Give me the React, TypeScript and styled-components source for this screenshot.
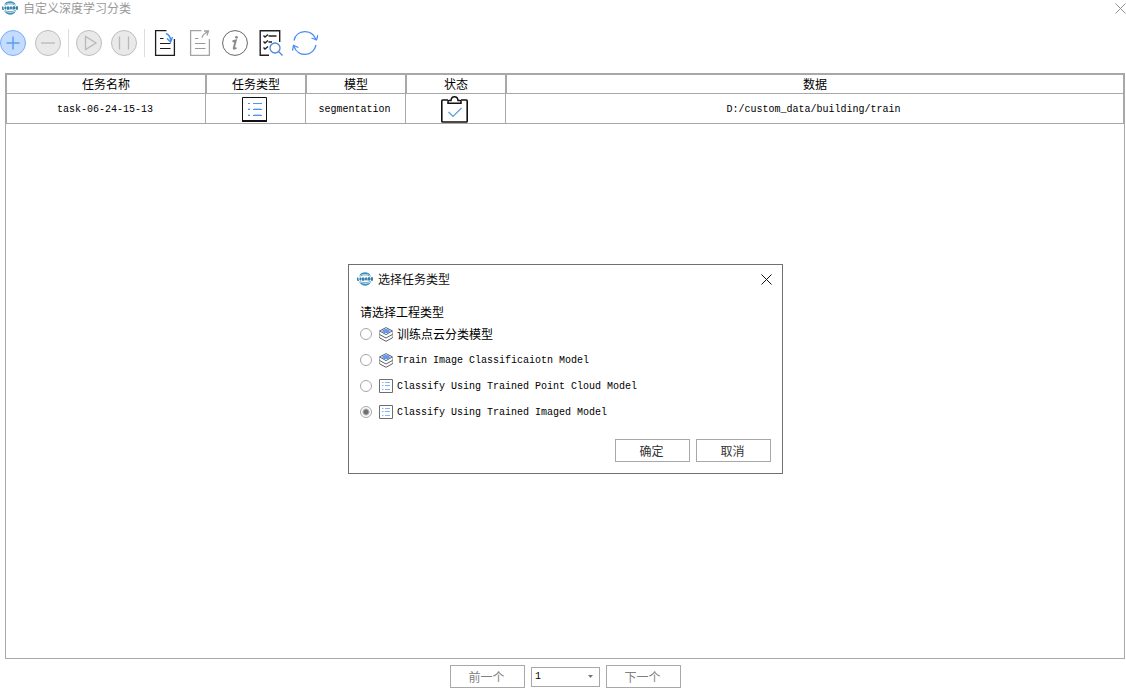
import React, { useState } from "react";
import styled, { createGlobalStyle } from "styled-components";

const line = "#a8a8a8";
const mono = `"Liberation Mono", "Noto Sans CJK SC", monospace`;
const sans = `"Noto Sans CJK SC", "Liberation Sans", sans-serif`;

const GlobalStyle = createGlobalStyle`
  * { box-sizing: border-box; }
  body { margin: 0; background: #fff; color: #000; font: 12px/16px ${sans}; }
  button, select, input { font: inherit; margin: 0; }
  svg { display: block; flex: none; }
`;

const Page = styled.div`
  display: flex;
  flex-direction: column;
  min-height: 100vh;
`;

const TitleBar = styled.header<{ $inset?: boolean }>`
  display: flex;
  align-items: center;
  gap: 5px;
  height: ${(p) => (p.$inset ? 28 : 16)}px;
  padding: ${(p) => (p.$inset ? "0 10px 0 8px" : "0 0 0 2px")};
`;

const Title = styled.h1<{ $muted?: boolean }>`
  flex: 1;
  margin: 0;
  font-size: 12px;
  line-height: 16px;
  font-weight: 400;
  color: ${(p) => (p.$muted ? "#999" : "#111")};
`;

const CloseButton = styled.button<{ $muted?: boolean }>`
  padding: 0;
  border: 0;
  background: none;
  color: ${(p) => (p.$muted ? "#909090" : "#111")};
`;

const Toolbar = styled.div`
  display: flex;
  align-items: center;
  gap: 7px;
  height: 54px;
`;

const ToolGroup = styled.div`
  display: flex;
  gap: 9px;
`;

const Separator = styled.span`
  width: 1px;
  height: 28px;
  background: #dcdcdc;
`;

const ToolButton = styled.button`
  width: 26px;
  height: 26px;
  padding: 0;
  border: 0;
  background: none;
`;

const Panel = styled.main`
  flex: 1;
  margin: 3px 1px 0 5px;
  border: 1px solid ${line};
`;

const TaskTable = styled.table`
  width: 100%;
  table-layout: fixed;
  border-collapse: separate;
  border-spacing: 0;
  text-align: center;
`;

const Column = styled.col<{ $width?: number }>`
  width: ${(p) => (p.$width ? `${p.$width}px` : "auto")};
`;

const HeadCell = styled.th`
  height: 20px;
  padding: 0;
  border: 1px solid ${line};
  font-weight: 400;
  line-height: 18px;
`;

const Cell = styled.td`
  height: 30px;
  padding: 2px 2px 0 0;
  border: solid ${line};
  border-width: 0 1px 1px 0;
  font: 10px/14px ${mono};
  &:first-child { border-left-width: 1px; }
  svg { margin: 0 auto; }
`;

const Pager = styled.nav`
  display: flex;
  justify-content: center;
  align-items: center;
  gap: 6px;
  padding: 6px 0 6px 5px;
`;

const PushButton = styled.button<{ $muted?: boolean }>`
  width: 75px;
  height: 23px;
  padding: 0 2px 0 0;
  border: 1px solid ${line};
  background: #fff;
  color: ${(p) => (p.$muted ? "#808080" : "#333")};
  line-height: 20px;
`;

const SelectBox = styled.label`
  display: grid;
  align-items: center;
  width: 69px;
  & > * { grid-area: 1 / 1; }
  svg { justify-self: end; margin-right: 7px; pointer-events: none; }
`;

const PageSelect = styled.select`
  appearance: none;
  width: 100%;
  height: 20px;
  padding: 1px 3px 0;
  border: 1px solid ${line};
  border-radius: 0;
  background: #fff;
  color: #000;
  font: 10px/16px ${mono};
`;

const Dialog = styled.section`
  position: absolute;
  top: 264px;
  left: 50%;
  width: 435px;
  margin-left: -215px;
  border: 1px solid #707070;
  background: #fff;
`;

const Choices = styled.fieldset`
  display: grid;
  margin: 0;
  padding: 10px 11px 0;
  border: 0;
`;

const Legend = styled.legend`
  float: left;
  padding: 0;
  line-height: 18px;
`;

const Choice = styled.label`
  display: flex;
  align-items: center;
  height: 26px;
`;

const Radio = styled.input`
  appearance: none;
  width: 12px;
  height: 12px;
  border: 1px solid #a6a6a6;
  border-radius: 50%;
  background: #fff;
  &:checked {
    background: radial-gradient(circle, #707070 0 2px, #fff 4px);
  }
`;

const ChoiceText = styled.span<{ $latin?: boolean }>`
  padding-top: ${(p) => (p.$latin ? 2 : 0)}px;
  font: ${(p) => (p.$latin ? `10px/14px ${mono}` : `12px/16px ${sans}`)};
`;

const ChoiceIcon = styled.span`
  margin: 0 4px 0 7px;
`;

const Actions = styled.div`
  display: flex;
  justify-content: flex-end;
  gap: 6px;
  padding: 14px 11px 11px;
`;

const Logo = () => (
  <svg width="16" height="16" viewBox="0 0 16 16" fill="none" aria-hidden="true">
    <path d="M2.2 4.5C4.5.2 11.5.2 13.8 4.5C10 2.500 6 2.500 2.200 4.500Z" fill="#3d93bd" />
    <path d="M2.500 5.400C6 3.400 10 3.400 13.500 5.400" stroke="#69aed0" />
    <path d="M2 11C5 15.800 11.500 16 14.200 11C10.500 13.400 6.500 13.200 2 11Z" fill="#3d93bd" />
    <path d="M2.500 10.600C6 12 10 12 13.800 10.400" stroke="#69aed0" />
    <path d="M0 8h16" stroke="#8fb9cf" strokeWidth="2.400" />
    <path d="M.5 6.500v3h1.500M3.500 6.500v3M5.500 6.500v3h1v-3M8 9.500l1-3 1 3M11.500 9.500v-3h1v3M14.500 6.500h1v3h-1Z" stroke="#256f99" strokeWidth=".8" />
  </svg>
);

const Cross = () => (
  <svg width="11" height="11" viewBox="0 0 11 11" stroke="currentColor" aria-hidden="true">
    <path d="M.5.5l10 10M10.500.5l-10 10" />
  </svg>
);

const Tool = ({ label, disabled, children }: { label: string; disabled?: boolean; children: React.ReactNode }) => (
  <ToolButton type="button" aria-label={label} title={label} disabled={disabled}>
    <svg width="26" height="26" viewBox="0 0 26 26" fill="none">{children}</svg>
  </ToolButton>
);

const Disc = ({ active }: { active?: boolean }) => (
  <circle cx="13" cy="13" r="12.500" fill={active ? "#c4dcff" : "#e9e9e9"} stroke={active ? "#78aaf5" : "#bdbdbd"} />
);

const ListGlyph = ({ size }: { size: number }) => {
  const big = size > 20;
  return big ? (
    <svg width="25" height="25" viewBox="0 0 25 25" fill="none" aria-hidden="true">
      <path d="M.5.5h24v23H.5Z" stroke="#111" />
      <path d="M0 24h25" stroke="#111" strokeWidth="2" />
      <path d="M6 6.500h2M6 12.500h2M6 18.500h2M11 6.500h9M11 12.500h9M11 18.500h9" stroke="#4f94f5" />
      <path d="M6 11.500h2M6 17.500h2M12 11.500h7M12 17.500h7" stroke="#b9d7ff" />
    </svg>
  ) : (
    <svg width="14" height="14" viewBox="0 0 14 14" fill="none" aria-hidden="true">
      <path d="M.5.5h13v13H.5Z" stroke="#6e6e6e" />
      <path d="M3 3.500h1.500M3 6.500h1.500M3 10.500h1.500M6 3.500h5M6 6.500h5M6 10.500h5" stroke="#82b4f8" />
    </svg>
  );
};

const Layers = () => (
  <svg width="14" height="15" viewBox="0 0 14 15" fill="none" stroke="#5c6066" aria-hidden="true">
    <path d="M7 .6L13.400 3.900 7 7.600.6 3.900Z" fill="#fff" />
    <ellipse cx="7" cy="4" rx="3.800" ry="2.100" fill="#5b9cf5" stroke="none" />
    <path d="M.6 6.500v1L7 11l6.400-3.500v-1M.6 9.800v1L7 14.300l6.400-3.500v-1" />
    <path d="M.6 4v2.500M13.400 4v2.500M.6 7.500v2.300M13.400 7.500v2.300" strokeWidth=".5" />
  </svg>
);

const Clipboard = () => (
  <svg width="27" height="27" viewBox="0 0 27 27" fill="none" aria-hidden="true">
    <path d="M7 4H1.500Q.8 4 .8 5v20.200q0 .8.800.8h23.800q.8 0 .8-.8V5q0-1-.8-1H20" stroke="#111" strokeWidth="1.600" />
    <path d="M7 7.200V5.500q0-1 1-1h2C10.500-.5 16.500-.5 17 4.500h2q1 0 1 1v1.700Z" fill="#fff" stroke="#111" strokeWidth="1.500" />
    <path d="M7.500 16l4.500 4.500L20.500 12" stroke="#5b9bd8" strokeWidth="1.200" />
  </svg>
);

const columns = [
  { name: "任务名称", width: 200 },
  { name: "任务类型", width: 100 },
  { name: "模型", width: 100 },
  { name: "状态", width: 100 },
  { name: "数据" },
];

const choices = [
  { text: "训练点云分类模型", latin: false, icon: <Layers /> },
  { text: "Train Image Classificaiotn Model", latin: true, icon: <Layers /> },
  { text: "Classify Using Trained Point Cloud Model", latin: true, icon: <ListGlyph size={14} /> },
  { text: "Classify Using Trained Imaged Model", latin: true, icon: <ListGlyph size={14} /> },
];

export default function App() {
  const [selected, setSelected] = useState(3);
  return (
    <Page>
      <GlobalStyle />
      <TitleBar>
        <Logo />
        <Title $muted>自定义深度学习分类</Title>
        <CloseButton type="button" $muted aria-label="关闭"><Cross /></CloseButton>
      </TitleBar>

      <Toolbar role="toolbar">
        <ToolGroup>
          <Tool label="新建">
            <Disc active />
            <path d="M6.500 13h13M13 6.500v13" stroke="#5d9af3" strokeWidth="1.400" />
          </Tool>
          <Tool label="删除" disabled>
            <Disc />
            <path d="M6 13h14" stroke="#b8b8b8" strokeWidth="1.300" />
          </Tool>
        </ToolGroup>
        <Separator />
        <ToolGroup>
          <Tool label="开始" disabled>
            <Disc />
            <path d="M9.500 6.500v13L20 13Z" stroke="#b8b8b8" strokeWidth="1.300" />
          </Tool>
          <Tool label="暂停" disabled>
            <Disc />
            <path d="M8.500 6.500v13M17.500 6.500v13" stroke="#b8b8b8" strokeWidth="1.300" />
          </Tool>
        </ToolGroup>
        <Separator />
        <ToolGroup>
          <Tool label="导入">
            <path d="M14.500 .7H3.600v24.600h18.800V9" stroke="#1c1c1c" strokeWidth="1.300" />
            <path d="M8 8.500h3.500M8 13.500h10.500M8 18.500h10.500" stroke="#1c1c1c" strokeWidth="1.200" />
            <path d="M14 3.500c3 1 4.500 3 4.800 8" stroke="#438af5" strokeWidth="1.500" />
            <path d="M15 8.500l3.500 3.500 2-5" stroke="#438af5" strokeWidth="1.400" />
          </Tool>
          <Tool label="导出" disabled>
            <path d="M14.500 .7H3.600v24.600h18.800V9" stroke="#a4a4a4" strokeWidth="1.300" />
            <path d="M8 8.500h3.500M8 13.500h10.500M8 18.500h10.500" stroke="#9a9a9a" strokeWidth="1.200" />
            <path d="M15 7.500c.5-2.500 2.500-4 6-6M17 1h4.500l-1.500 4.500" stroke="#a0a0a0" strokeWidth="1.300" />
          </Tool>
          <Tool label="信息">
            <circle cx="13" cy="13" r="12.400" stroke="#666" />
            <circle cx="14.500" cy="7.300" r="1.400" fill="#8a8a8a" />
            <path d="M10.500 11.500l3.300-1L11.800 18q-.4 1.600 2.700-.3" stroke="#8a8a8a" strokeWidth="1.900" />
          </Tool>
          <Tool label="查看">
            <path d="M12 25.200H3.200V.8h19.500V12" stroke="#202020" strokeWidth="1.400" />
            <path d="M6.500 5.500l1.500 1.500 3-2.500M6.500 11.500l1.500 1.500 3-2.500M6.500 17.500l1.500 1.500 3-2.500M11.500 6h8M11.500 12h3.500" stroke="#202020" strokeWidth="1.300" />
            <circle cx="18" cy="18" r="5" stroke="#4e86d8" strokeWidth="1.300" />
            <path d="M21.500 21.500l4 4" stroke="#4e86d8" strokeWidth="1.300" />
          </Tool>
          <Tool label="刷新">
            <path d="M2 10.500C4.500-1 20-1.500 24 9.500M24 15C21.500 27 6 27.500 2 16.500" stroke="#4a8cf5" strokeWidth="1.300" />
            <path d="M19.500 8l5 2 1.500-5M6.500 17.500L1.500 15.500 .5 20.500" stroke="#4a8cf5" strokeWidth="1.300" />
          </Tool>
        </ToolGroup>
      </Toolbar>

      <Panel>
        <TaskTable>
          <colgroup>{columns.map((c) => <Column key={c.name} $width={c.width} />)}</colgroup>
          <thead>
            <tr>{columns.map((c) => <HeadCell key={c.name} scope="col">{c.name}</HeadCell>)}</tr>
          </thead>
          <tbody>
            <tr>
              <Cell>task-06-24-15-13</Cell>
              <Cell><ListGlyph size={25} /></Cell>
              <Cell>segmentation</Cell>
              <Cell><Clipboard /></Cell>
              <Cell>D:/custom_data/building/train</Cell>
            </tr>
          </tbody>
        </TaskTable>
      </Panel>

      <Pager>
        <PushButton type="button" $muted>前一个</PushButton>
        <SelectBox>
          <PageSelect aria-label="页码" defaultValue="1"><option>1</option></PageSelect>
          <svg width="5" height="3" viewBox="0 0 5 3" fill="#777" aria-hidden="true"><path d="M0 0h5L2.500 3Z" /></svg>
        </SelectBox>
        <PushButton type="button" $muted>下一个</PushButton>
      </Pager>

      <Dialog role="dialog" aria-labelledby="dialog-title">
        <TitleBar $inset>
          <Logo />
          <Title as="h2" id="dialog-title">选择任务类型</Title>
          <CloseButton type="button" aria-label="关闭"><Cross /></CloseButton>
        </TitleBar>
        <Choices>
          <Legend>请选择工程类型</Legend>
          {choices.map((c, i) => (
            <Choice key={c.text}>
              <Radio type="radio" name="task-type" checked={selected === i} onChange={() => setSelected(i)} />
              <ChoiceIcon>{c.icon}</ChoiceIcon>
              <ChoiceText $latin={c.latin}>{c.text}</ChoiceText>
            </Choice>
          ))}
        </Choices>
        <Actions>
          <PushButton type="button">确定</PushButton>
          <PushButton type="button">取消</PushButton>
        </Actions>
      </Dialog>
    </Page>
  );
}
